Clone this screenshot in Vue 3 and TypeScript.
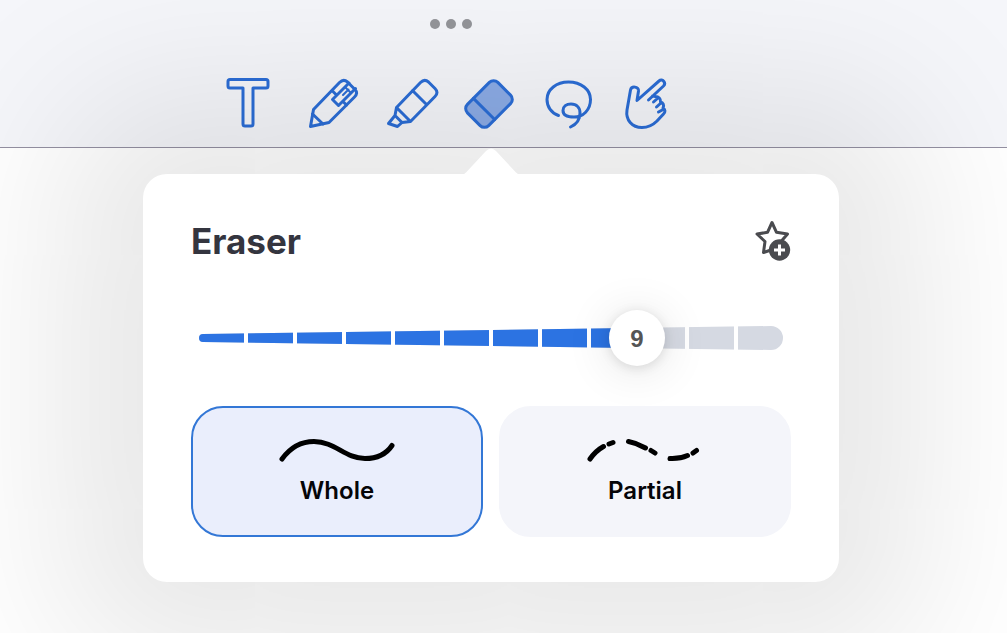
<script setup lang="ts">
import { computed, ref } from 'vue'

type Tool = 'text' | 'pen' | 'highlighter' | 'eraser' | 'lasso' | 'pointer'
type Mode = 'whole' | 'partial'

const activeTool = ref<Tool>('eraser')
const mode = ref<Mode>('whole')
const size = ref(9)
const steps = 12
const segments = Array.from({ length: steps }, (_, i) => i * 49)
const percent = computed(() => (size.value / steps) * 100)
</script>

<template>
  <div class="app">
    <header class="toolbar">
      <button class="more" type="button" aria-label="More options">
        <span class="dot"></span><span class="dot"></span><span class="dot"></span>
      </button>
      <nav class="tools" aria-label="Tools">
        <button class="tool" type="button" aria-label="Text" :aria-pressed="activeTool === 'text'" @click="activeTool = 'text'">
          <svg viewBox="208 70 80 64">
            <path d="M230 79.500H266Q268 79.500 268 81.500V86Q268 88 266 88H253V124Q253 126 251 126H245Q243 126 243 124V88H230Q228 88 228 86V81.500Q228 79.500 230 79.500Z" />
          </svg>
        </button>
        <button class="tool" type="button" aria-label="Pen" :aria-pressed="activeTool === 'pen'" @click="activeTool = 'pen'">
          <svg viewBox="288 70 80 64">
            <path d="M310.500 126.500L313.500 109.500L339.500 82.500Q343.500 78.500 347.500 82L355 89.500Q358.500 93 354.500 97L329 122.500Z" />
            <path d="M312.500 114L323 124M333 91.500L336.500 95M343 101.500L346.500 105M349 83L332.500 99.500L338.500 105.500L355.500 88.500" />
            <path class="detail" d="M348.500 89.500L343 95M345 87L351 93" />
          </svg>
        </button>
        <button class="tool" type="button" aria-label="Highlighter" :aria-pressed="activeTool === 'highlighter'" @click="activeTool = 'highlighter'">
          <svg viewBox="368 70 80 64">
            <path d="M396.500 107.500L420.500 82.500Q424.500 78.500 428.500 82L435 88.500Q439 92.500 435 96.500L410.500 121.500L402 122.500L397.500 126.500L388.500 123.500L395 115.500ZM396.500 107.500L410.500 121.500M395 115.500L402 122.500M412.500 90.500L426.500 104.500" />
          </svg>
        </button>
        <button class="tool" type="button" aria-label="Eraser" :aria-pressed="activeTool === 'eraser'" @click="activeTool = 'eraser'">
          <svg viewBox="448 70 80 64">
            <g transform="translate(489 104) rotate(-45)">
              <rect :class="{ tint: activeTool === 'eraser' }" x="-21.500" y="-15" width="43" height="30" rx="6" />
              <path d="M-7 -15V15" />
            </g>
          </svg>
        </button>
        <button class="tool" type="button" aria-label="Lasso" :aria-pressed="activeTool === 'lasso'" @click="activeTool = 'lasso'">
          <svg viewBox="528 70 80 64">
            <path d="M558.500 115.500C551 113 547 106.500 547 99.500C547 89.500 556.500 82 568.500 82C581 82 590.500 89.500 590.500 99.500C590.500 110 583 117 574 117C567 117 563 114.500 563 110.500C563 106.500 566.500 104 571 104C576.500 104 580 107.500 580 113C580 119.500 576 124.500 570.500 127" />
          </svg>
        </button>
        <button class="tool" type="button" aria-label="Pointer" :aria-pressed="activeTool === 'pointer'" @click="activeTool = 'pointer'">
          <svg viewBox="608 70 80 64">
            <path d="M648.500 100L663.500 86C666.500 83 662.500 78 659 81L637 100.500L638.500 91C639 86.500 631.500 85.500 630.500 90L627 110C625.500 120 632 127.500 642 127.500C648 127.500 653 125 657 121L663.500 114C665.500 112 665.500 109.500 663 108C664.500 105 663 102.500 660.500 102C661 98.500 658.500 96.500 655.500 96.500L652.500 96M658.500 97.500L653.500 102M661.500 102.500L656.500 107M664 109L658.500 112" />
          </svg>
        </button>
      </nav>
    </header>

    <main class="canvas">
      <section class="popover" aria-labelledby="popover-title">
        <svg class="arrow" viewBox="0 0 60 27" aria-hidden="true">
          <path d="M0 27Q3 26.500 5 24.500L25 3Q30 -2 35 3L55 24.500Q57 26.500 60 27Z" />
        </svg>
        <div class="heading">
          <h1 id="popover-title">Eraser</h1>
          <button class="favorite" type="button" aria-label="Add to favorites">
            <svg viewBox="0 0 36 42">
              <path class="star" d="M17 2.500L21.500 12.300L32.500 14L26 21.500L19 29L8.500 32.500L10 21.500L2 14L12.500 12.300Z" />
              <circle cx="24.500" cy="30" r="10.700" />
              <path class="plus" d="M24.500 24.500V35.500M19 30H30" />
            </svg>
          </button>
        </div>

        <div class="slider">
          <svg class="track" viewBox="0 0 584 24" aria-hidden="true">
            <defs>
              <clipPath id="taper">
                <path d="M4 8L572 0A12 12 0 0 1 572 24L4 16A4 4 0 0 1 4 8Z" />
              </clipPath>
              <clipPath id="filled">
                <rect x="0" y="0" :width="(584 * percent) / 100" height="24" />
              </clipPath>
            </defs>
            <g clip-path="url(#taper)">
              <rect v-for="x in segments" :key="x" class="rest" :x="x" y="0" width="45" height="24" />
              <g clip-path="url(#filled)">
                <rect v-for="x in segments" :key="x" class="fill" :x="x" y="0" width="45" height="24" />
              </g>
            </g>
          </svg>
          <input id="size" v-model.number="size" type="range" min="0" :max="steps" aria-label="Eraser size" />
          <output class="thumb" for="size" :style="{ left: percent + '%' }">{{ size }}</output>
        </div>

        <div class="modes">
          <button class="mode" :class="{ selected: mode === 'whole' }" type="button" :aria-pressed="mode === 'whole'" @click="mode = 'whole'">
            <svg viewBox="277 433 120 34" aria-hidden="true">
              <path d="M282 459C290 448 301 441.500 314 441.500C335 441.500 345 458.500 365 458.500C378 458.500 387 453 392 445.500" />
            </svg>
            <span>Whole</span>
          </button>
          <button class="mode" :class="{ selected: mode === 'partial' }" type="button" :aria-pressed="mode === 'partial'" @click="mode = 'partial'">
            <svg viewBox="585 433 120 34" aria-hidden="true">
              <path d="M590 459Q595.500 451 603.500 446.500M609 444L613 442.500M628.500 441.500Q637 443 645.500 448M651 450.500L655 453M670 458.500Q680 459 687.500 455.500M693 453L696.500 450.500" />
            </svg>
            <span>Partial</span>
          </button>
        </div>
      </section>
    </main>
  </div>
</template>

<style>
body {
  margin: 0;
  background: #ffffff;
}
</style>

<style scoped>
.app {
  min-height: 100vh;
  overflow: hidden;
  display: flex;
  flex-direction: column;
  font-family: Inter, "Liberation Sans", sans-serif;
}

button {
  appearance: none;
  border: 0;
  padding: 0;
  background: none;
  font: inherit;
  color: inherit;
  cursor: pointer;
}

svg {
  display: block;
}

.toolbar {
  display: flex;
  flex-direction: column;
  align-items: flex-start;
  padding: 14px 0 13px 208px;
  background: #f5f6fa;
  border-bottom: 1px solid #9490a2;
}

.more {
  display: flex;
  align-items: center;
  gap: 6px;
  height: 20px;
  margin-left: 222px;
}

.dot {
  width: 10px;
  height: 10px;
  border-radius: 50%;
  background: #94959a;
}

.tools {
  display: flex;
  margin-top: 36px;
}

.tool svg {
  width: 80px;
  height: 64px;
  fill: none;
  stroke: #2b6dd6;
  stroke-width: 3;
  stroke-linecap: round;
  stroke-linejoin: round;
}

.tool .tint {
  fill: #8cace6;
}

.tool .detail {
  stroke-width: 2;
}

.canvas {
  flex: 1;
  padding: 26px 168px 51px 143px;
}

.popover {
  position: relative;
  padding: 43px 48px 45px;
  border-radius: 24px;
  background: #ffffff;
  box-shadow: 0 0 170px 80px rgba(0, 0, 0, 0.1);
}

.arrow {
  position: absolute;
  left: 50%;
  bottom: 100%;
  width: 60px;
  height: 27px;
  margin: 0 0 -1px -30px;
  fill: #ffffff;
}

.heading {
  display: flex;
  align-items: center;
  justify-content: space-between;
  height: 48px;
}

h1 {
  margin: 0;
  font-size: 35px;
  line-height: 48px;
  font-weight: 700;
  color: #34353f;
}

.favorite svg {
  width: 36px;
  height: 42px;
  fill: #4a4b4f;
}

.favorite .star {
  fill: none;
  stroke: #4a4b4f;
  stroke-width: 3;
  stroke-linejoin: round;
}

.favorite .plus {
  stroke: #ffffff;
  stroke-width: 3;
}

.slider {
  position: relative;
  display: flex;
  align-items: center;
  height: 56px;
  margin: 45px 8px 40px;
}

.track {
  width: 100%;
}

.rest {
  fill: #d5d9e2;
}

.fill {
  fill: #2c73e2;
}

.slider input {
  position: absolute;
  inset: 0;
  width: 100%;
  height: 100%;
  margin: 0;
  opacity: 0;
  cursor: pointer;
}

.thumb {
  position: absolute;
  top: 0;
  width: 56px;
  height: 56px;
  margin-left: -28px;
  border-radius: 50%;
  background: #ffffff;
  box-shadow: 0 4px 48px rgba(0, 0, 0, 0.12), 0 2px 12px rgba(0, 0, 0, 0.12);
  color: #555555;
  font-family: "Liberation Sans", sans-serif;
  font-size: 24px;
  line-height: 58px;
  font-weight: 700;
  text-align: center;
  pointer-events: none;
}

.modes {
  display: grid;
  grid-template-columns: 1fr 1fr;
  gap: 16px;
}

.mode {
  display: flex;
  flex-direction: column;
  align-items: center;
  gap: 10px;
  padding: 25px 0 30px;
  border: 2px solid #f4f5fa;
  border-radius: 32px;
  background: #f4f5fa;
  color: #050508;
  font-size: 24px;
  line-height: 28px;
  font-weight: 600;
}

.mode.selected {
  border-color: #3377d6;
  background: #eaeefc;
}

.mode svg {
  width: 120px;
  height: 34px;
  fill: none;
  stroke: #000000;
  stroke-width: 5;
  stroke-linecap: round;
}
</style>
